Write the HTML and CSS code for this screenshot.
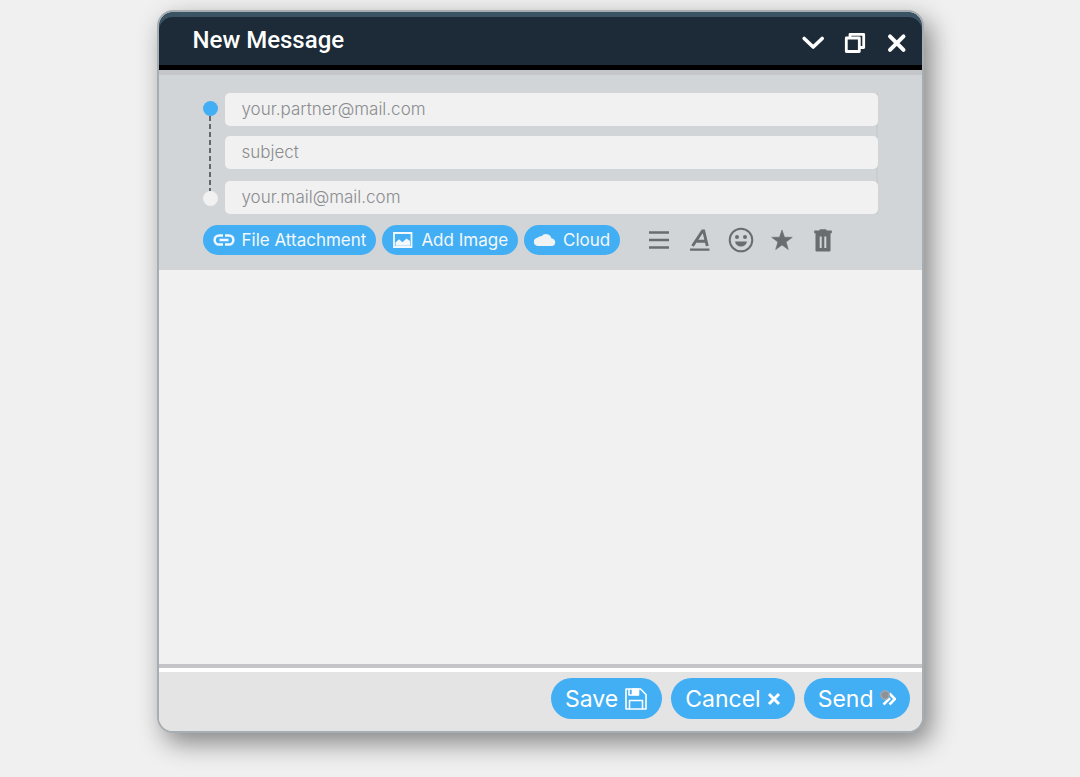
FILE: index.html
```html
<!DOCTYPE html>
<html lang="en">
<head>
    <meta charset="UTF-8">
    <meta name="viewport" content="width=device-width, initial-scale=1.0">
    <title>New Message</title>
    <link rel="stylesheet" href="styles.css">
</head>
<body>

    <form class="window">
        <!-- Title bar -->
        <header class="title-bar">
            <h1>New Message</h1>
            <div class="window-controls">
                <button type="button" aria-label="Minimize">
                    <svg width="24" height="24" viewBox="0 0 24 24"><path d="M3.200 7.500l9 8.500 9-8.500" fill="none" stroke="#fff" stroke-width="3.600" stroke-linecap="round" stroke-linejoin="round"/></svg>
                </button>
                <button type="button" aria-label="Restore">
                    <svg width="24" height="24" viewBox="0 0 24 24" fill="none" stroke="#fff" stroke-width="2.800" stroke-linejoin="round"><path d="M3.300 7h13v13.500h-13z"/><path d="M7 6.500V3.300h13.700v13.200H17"/></svg>
                </button>
                <button type="button" aria-label="Close">
                    <svg width="24" height="24" viewBox="0 0 24 24"><path d="M5 5.300l13.500 13.500M18.500 5.300L5 18.800" stroke="#fff" stroke-width="4" stroke-linecap="round"/></svg>
                </button>
            </div>
        </header>

        <!-- Address fields and tools -->
        <section class="details">
            <div class="address">
                <div class="route">
                    <span class="dot dot-to"></span>
                    <span class="dash"></span>
                    <span class="dot dot-from"></span>
                </div>
                <div class="fields">
                    <input type="email" name="to" aria-label="To" placeholder="your.partner@mail.com">
                    <input type="text" name="subject" aria-label="Subject" placeholder="subject">
                    <input type="email" name="from" class="from" aria-label="From" placeholder="your.mail@mail.com">
                </div>
            </div>

            <div class="toolbar">
                <div class="attach">
                    <button type="button" class="pill">
                        <svg width="22" height="20" viewBox="0 0 22 20" fill="none" stroke="#f3f8fc" stroke-width="2.500"><path d="M10 5.400H6.200a4.600 4.600 0 0 0 0 9.200H10M12 5.400h3.800a4.600 4.600 0 0 1 0 9.200H12M6.500 10h9"/></svg>
                        File Attachment
                    </button>
                    <button type="button" class="pill">
                        <svg width="22" height="20" viewBox="0 0 22 20"><path d="M2 3h17.500v14H2z" fill="none" stroke="#f3f8fc" stroke-width="1.800"/><path d="M3.500 15.800v-3.300l3.500-3.300 3.500 3 4-3.700 3.500 2.500v4.800z" fill="#f3f8fc"/></svg>
                        Add Image
                    </button>
                    <button type="button" class="pill">
                        <svg width="22" height="20" viewBox="1 0 22 20"><path d="M5.500 16a4.500 4.200 0 0 1-.5-8.400A3.600 3.600 0 0 1 8.500 6.300a5.600 5.600 0 0 1 10 2.300A4 3.800 0 0 1 19.500 16z" fill="#f1f2f3"/></svg>
                        Cloud
                    </button>
                </div>
                <div class="tools">
                    <button type="button" aria-label="Menu">
                        <svg width="26" height="26" viewBox="0 0 26 26"><path d="M3 5.500h20M3 13h20M3 20.500h20" stroke="#696d70" stroke-width="2.600"/></svg>
                    </button>
                    <button type="button" aria-label="Text style">
                        <svg width="26" height="26" viewBox="0 0 26 26" fill="none" stroke="#696d70"><path d="M5.500 19L15.500 4h1.200l3.600 15M9.300 14.200h9.500" stroke-width="2.900"/><path d="M3 22.700h19.500" stroke-width="2.200"/></svg>
                    </button>
                    <button type="button" aria-label="Emoji">
                        <svg width="26" height="26" viewBox="0 0 26 26"><circle cx="13" cy="13" r="11.300" fill="none" stroke="#696d70" stroke-width="2"/><circle cx="9" cy="10" r="2" fill="#696d70"/><circle cx="17" cy="10" r="2" fill="#696d70"/><path d="M7 14.600h12c-.6 3.300-3 5-6 5s-5.400-1.700-6-5z" fill="#696d70"/></svg>
                    </button>
                    <button type="button" aria-label="Favorite">
                        <svg width="26" height="26" viewBox="0 0 26 26"><path d="M13 3l2.500 7.200 7.800.1-6.200 4.700 2.200 7.500-6.300-4.500-6.300 4.500 2.200-7.500-6.200-4.700 7.800-.1z" fill="#696d70" stroke="#696d70" stroke-width=".6"/></svg>
                    </button>
                    <button type="button" aria-label="Delete">
                        <svg width="26" height="26" viewBox="0 0 26 26"><path d="M10 2.200h6l.8 1.200h5v2.800H4.200V3.400h5z" fill="#696d70"/><path d="M5.500 6h15v17.500a1 1 0 0 1-1 1h-13a1 1 0 0 1-1-1z" fill="#696d70"/><path d="M10.700 9.500V21M15.300 9.500V21" stroke="#d1d5d8" stroke-width="2"/></svg>
                    </button>
                </div>
            </div>
        </section>

        <textarea class="message" name="message" aria-label="Message"></textarea>

        <!-- Actions -->
        <footer class="actions">
            <button type="button" class="action">
                Save
                <svg width="24" height="24" viewBox="0 0 24 24" fill="none" stroke="#fff" stroke-width="1.600" stroke-linejoin="round"><path d="M2 2h14.500L22 7.500V22H2z"/><path d="M5.500 22v-8.500h13V22M5 2v6h9.500V2"/><path d="M8.500 2H14v5.500H8.500z" fill="#fff"/></svg>
            </button>
            <button type="reset" class="action">
                Cancel
                <svg width="14" height="24" viewBox="0 0 14 24"><path d="M2 7l10 10M12 7L2 17" stroke="#fff" stroke-width="3"/></svg>
            </button>
            <button type="submit" class="action">
                Send
                <svg width="16" height="24" viewBox="0 0 16 24" fill="none" stroke="#fff" stroke-width="2.600"><path d="M3.500 6.500L9 12l-5.500 5.500M9.500 6.500L15 12l-5.500 5.500"/><circle cx="5" cy="8" r="4.200" fill="#8c9298" stroke="#9ba8b2" stroke-width="1.500"/></svg>
            </button>
        </footer>
    </form>

</body>
</html>
```
FILE: styles.css
```css
* {
    box-sizing: border-box;
}

body {
    margin: 0;
    padding: 10px 20px 44px;
    min-height: 100vh;
    display: flex;
    justify-content: center;
    background-color: #f0f0f0;
    font-family: Inter, "Open Sans", sans-serif;
}

button {
    border: none;
    padding: 0;
    background: none;
    font-family: inherit;
    cursor: pointer;
}

svg {
    display: block;
    flex: none;
}

/* Mail window */
.window {
    width: 100%;
    max-width: 767px;
    display: flex;
    flex-direction: column;
    overflow: hidden;
    border: 2px solid #a7aeb3;
    border-radius: 16px;
    background-color: #f1f1f2;
    box-shadow: 7px 10px 26px rgba(0, 0, 0, 0.45);
}

/* Title bar */
.title-bar {
    display: flex;
    justify-content: space-between;
    align-items: center;
    height: 58px;
    padding: 4px 13px 0 34px;
    color: #fff;
    background-color: #1c2b37;
    border-bottom: 5px solid #000;
    border-radius: 14px 14px 0 0;
    box-shadow: inset 0 5px 0 #3b5464;
}

.title-bar h1 {
    margin: 0 0 2px;
    font-family: Roboto, sans-serif;
    font-size: 24px;
    line-height: 30px;
    font-weight: 500;
}

.window-controls {
    display: flex;
    gap: 18px;
    padding-top: 4px;
}

/* Address fields and tools */
.details {
    padding: 18px 44px 15px;
    background-color: #d1d5d8;
    border-top: 5px solid #c5c6c9;
}

.address {
    display: flex;
    gap: 7px;
}

.route {
    display: flex;
    flex-direction: column;
    align-items: center;
    padding: 8px 0;
}

.dot {
    width: 15px;
    height: 15px;
    border-radius: 50%;
}

.dot-to {
    background-color: #42aef4;
}

.dot-from {
    background-color: #f1f1f2;
}

.dash {
    flex: 1;
    width: 2px;
    background: repeating-linear-gradient(#63676b 0 5px, transparent 5px 8px);
}

.fields {
    flex: 1;
    display: flex;
    flex-direction: column;
    gap: 10px;
    box-shadow: inset -2px 0 0 #cbced1;
}

.fields input {
    width: 100%;
    height: 33px;
    padding: 0 17px 2px;
    border: none;
    border-radius: 5px;
    background-color: #f1f1f2;
    color: #444;
    font-family: inherit;
    font-size: 17px;
    font-weight: 300;
}

.fields .from {
    margin-top: 2px;
}

.fields input::placeholder {
    color: #8a8c8e;
}

.toolbar {
    display: flex;
    align-items: center;
    gap: 26px;
    margin-top: 11px;
}

.attach {
    display: flex;
    gap: 6px;
}

.pill {
    display: flex;
    align-items: center;
    gap: 7px;
    height: 30px;
    padding: 0 10px;
    border-radius: 15px;
    background-color: #42aef4;
    color: #f3f8fc;
    font-size: 17px;
    white-space: nowrap;
}

.tools {
    display: flex;
    gap: 15px;
}

/* Message body */
.message {
    flex: 1;
    min-height: 120px;
    padding: 20px 44px;
    border: none;
    resize: none;
    background-color: #f1f1f2;
    font-family: inherit;
    font-size: 17px;
}

/* Actions */
.actions {
    display: flex;
    justify-content: flex-end;
    gap: 9px;
    padding: 10px 12px 12px;
    background-color: #e4e4e4;
    border-top: 4px solid #c5c5c7;
    box-shadow: inset 0 4px 0 #fff;
}

.action {
    display: flex;
    align-items: center;
    gap: 6px;
    height: 41px;
    padding: 0 14px;
    border-radius: 21px;
    background-color: #42aef4;
    color: #fff;
    font-size: 23px;
}
```
